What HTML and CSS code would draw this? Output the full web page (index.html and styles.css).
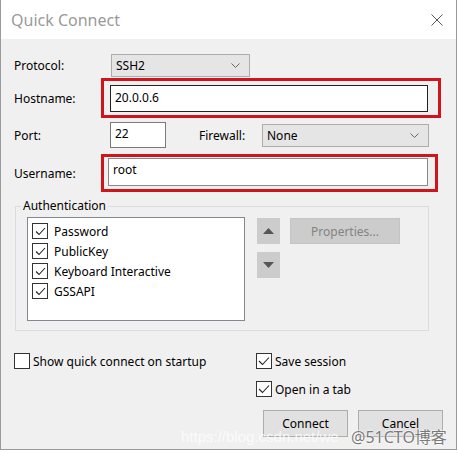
FILE: index.html
```html
<!DOCTYPE html>
<html lang="en">
<head>
    <meta charset="UTF-8">
    <title>Quick Connect</title>
    <link rel="stylesheet" href="styles.css">
</head>
<body>
    <div class="dialog">
        <div class="titlebar">
            <span class="title">Quick Connect</span>
            <svg class="close" width="12" height="12" viewBox="0 0 12 12">
                <path d="M0.5 0.5 L11.5 11.5 M11.5 0.5 L0.5 11.5" stroke="#555" stroke-width="1" fill="none"/>
            </svg>
        </div>
        <div class="content">
            <div class="row row-protocol">
                <span class="label">Protocol:</span>
                <div class="select protocol-select">
                    <span>SSH2</span>
                    <svg width="9" height="5" viewBox="0 0 9 5"><path d="M0.5 0.5 L4.5 4.5 L8.5 0.5" stroke="#666" fill="none"/></svg>
                </div>
            </div>
            <div class="row row-host">
                <span class="label">Hostname:</span>
                <div class="mark mark-host">
                    <div class="input host-input">20.0.0.6</div>
                </div>
            </div>
            <div class="row row-port">
                <span class="label">Port:</span>
                <div class="input port-input">22</div>
                <span class="fw-label">Firewall:</span>
                <div class="select fw-select">
                    <span>None</span>
                    <svg width="9" height="5" viewBox="0 0 9 5"><path d="M0.5 0.5 L4.5 4.5 L8.5 0.5" stroke="#666" fill="none"/></svg>
                </div>
            </div>
            <div class="row row-user">
                <span class="label">Username:</span>
                <div class="mark mark-user">
                    <div class="input user-input">root</div>
                </div>
            </div>

            <div class="group">
                <span class="legend">Authentication</span>
                <div class="group-inner">
                    <div class="listbox">
                        <div class="check-row"><span class="box"><svg width="13" height="13" viewBox="0 0 13 13"><path d="M2 6.5 L5 9.5 L11 3" stroke="#222" stroke-width="1.1" fill="none"/></svg></span>Password</div>
                        <div class="check-row"><span class="box"><svg width="13" height="13" viewBox="0 0 13 13"><path d="M2 6.5 L5 9.5 L11 3" stroke="#222" stroke-width="1.1" fill="none"/></svg></span>PublicKey</div>
                        <div class="check-row"><span class="box"><svg width="13" height="13" viewBox="0 0 13 13"><path d="M2 6.5 L5 9.5 L11 3" stroke="#222" stroke-width="1.1" fill="none"/></svg></span>Keyboard Interactive</div>
                        <div class="check-row"><span class="box"><svg width="13" height="13" viewBox="0 0 13 13"><path d="M2 6.5 L5 9.5 L11 3" stroke="#222" stroke-width="1.1" fill="none"/></svg></span>GSSAPI</div>
                    </div>
                    <div class="arrows">
                        <div class="arrow-btn"><svg width="11" height="6" viewBox="0 0 11 6"><path d="M0 6 L5.5 0 L11 6 Z" fill="#555"/></svg></div>
                        <div class="arrow-btn"><svg width="11" height="6" viewBox="0 0 11 6"><path d="M0 0 L5.5 6 L11 0 Z" fill="#555"/></svg></div>
                    </div>
                    <div class="btn-disabled">Properties...</div>
                </div>
            </div>

            <div class="bottom">
                <div class="check-row opt"><span class="box"></span>Show quick connect on startup</div>
                <div class="check-row opt"><span class="box"><svg width="14" height="14" viewBox="0 0 14 14"><path d="M2 7 L5.5 10.5 L12 3.5" stroke="#222" stroke-width="1.1" fill="none"/></svg></span>Save session</div>
                <div></div>
                <div class="check-row opt"><span class="box"><svg width="14" height="14" viewBox="0 0 14 14"><path d="M2 7 L5.5 10.5 L12 3.5" stroke="#222" stroke-width="1.1" fill="none"/></svg></span>Open in a tab</div>
                <div></div>
                <div class="buttons">
                    <div class="btn">Connect</div>
                    <div class="btn">Cancel</div>
                </div>
            </div>
        </div>
        <div class="watermark">
            <span class="wm-url">https://blog.csdn.net/we</span>
            <span class="wm-site">@51CTO博客</span>
        </div>
    </div>
</body>
</html>
```

FILE: styles.css
```css
body {
    margin: 0;
    background-color: #fff;
    font-family: "Noto Sans", "Open Sans", "Noto Sans CJK SC", sans-serif;
    font-size: 12px;
    color: #000;
}

.dialog {
    position: relative;
    width: 455px;
    height: 449px;
    border: 1px solid #9a9a9a;
    border-top: none;
    background-color: #f0f0f0;
}

.titlebar {
    height: 39px;
    background-color: #fff;
    display: flex;
    align-items: center;
    justify-content: space-between;
    padding: 0 13px 0 10px;
}

.title {
    font-size: 16px;
    color: #9a9a9a;
    margin-top: 1px;
}

.close {
    margin-top: 1px;
}

.content {
    padding: 15px 0 0 13px;
}

.row {
    display: flex;
    align-items: center;
}

.label {
    width: 87px;
    flex-shrink: 0;
}

.row-protocol {
    height: 23px;
}

.select {
    box-sizing: border-box;
    height: 23px;
    background-color: #e5e5e5;
    border: 1px solid #adadad;
    display: flex;
    align-items: center;
    justify-content: space-between;
    padding: 0 9px 0 4px;
}

.protocol-select {
    margin-left: 10px;
    width: 139px;
}

.mark {
    box-sizing: border-box;
    border: 3px solid #d0141b;
}

.input {
    box-sizing: border-box;
    background-color: #fff;
    border: 1px solid #7a7a7a;
    padding: 0 4px;
    display: flex;
    align-items: center;
}

.row-host {
    margin-top: 1px;
}

.mark-host {
    width: 340px;
    height: 40px;
    padding: 4px 10px 0 6px;
}

.host-input {
    height: 27px;
    border-color: #222;
    padding-bottom: 3px;
}

.row-port {
    margin-top: 4px;
    height: 26px;
}

.port-input {
    margin-left: 9px;
    width: 56px;
    height: 26px;
    border-color: #7a7a7a;
    align-items: flex-start;
    padding-top: 2px;
}

.fw-label {
    margin-left: 33px;
    width: 63px;
}

.fw-select {
    width: 167px;
}

.row-user {
    margin-top: 6px;
}

.mark-user {
    width: 337px;
    height: 38px;
    padding: 1px 7px 0 4px;
}

.user-input {
    height: 28px;
    border-color: #8a8a8a;
    padding-bottom: 6px;
}

.group {
    position: relative;
    box-sizing: border-box;
    margin: 14px 0 0 1px;
    width: 414px;
    height: 125px;
    border: 1px solid #dcdcdc;
    padding: 10px 0 0 11px;
}

.legend {
    position: absolute;
    top: -9px;
    left: 5px;
    padding: 0 2px;
    background-color: #f0f0f0;
    line-height: 16px;
}

.group-inner {
    display: flex;
    align-items: flex-start;
}

.listbox {
    box-sizing: border-box;
    width: 218px;
    height: 104px;
    background-color: #fff;
    border: 1px solid #828790;
    padding: 3px 0 0 4px;
}

.check-row {
    display: flex;
    align-items: center;
    height: 20px;
}

.box {
    box-sizing: border-box;
    width: 16px;
    height: 16px;
    border: 1px solid #333;
    background-color: #fff;
    margin-right: 6px;
    display: flex;
    align-items: center;
    justify-content: center;
}

.arrows {
    display: flex;
    flex-direction: column;
    gap: 8px;
    margin: 1px 0 0 12px;
}

.arrow-btn {
    width: 23px;
    height: 26px;
    background-color: #cccccc;
    display: flex;
    align-items: center;
    justify-content: center;
}

.btn-disabled {
    box-sizing: border-box;
    margin: 1px 0 0 10px;
    width: 110px;
    height: 26px;
    background-color: #cccccc;
    border: 1px solid #c4c4c4;
    color: #838383;
    display: flex;
    align-items: center;
    justify-content: center;
}

.bottom {
    display: grid;
    grid-template-columns: 242px 1fr;
    row-gap: 12px;
    margin-top: 22px;
}

.opt {
    height: 16px;
}

.opt .box {
    margin-right: 3px;
}

.buttons {
    display: flex;
    gap: 10px;
    margin: 1px 0 0 7px;
}

.btn {
    box-sizing: border-box;
    width: 85px;
    height: 27px;
    background-color: #e1e1e1;
    border: 1px solid #adadad;
    display: flex;
    align-items: center;
    justify-content: center;
}

.watermark {
    position: absolute;
    left: 180px;
    bottom: 1px;
    display: flex;
    align-items: center;
    white-space: nowrap;
}

.wm-url {
    font-family: "Liberation Sans", sans-serif;
    font-size: 15px;
    color: rgba(255, 255, 255, 0.75);
    width: 170px;
}

.wm-site {
    font-size: 16px;
    color: #7a7a7a;
    text-shadow: 0 0 2px #fff, 0 0 2px #fff;
}
```
